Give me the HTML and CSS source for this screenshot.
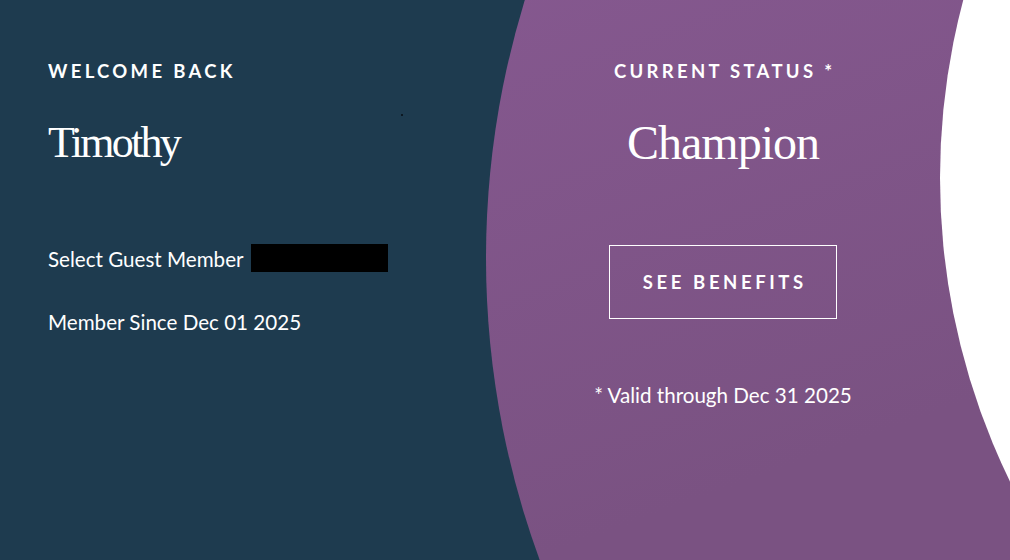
FILE: index.html
```html
<!DOCTYPE html>
<html lang="en">
<head>
<meta charset="utf-8">
<title>Welcome back</title>
<link rel="stylesheet" href="styles.css">
</head>
<body>
<section class="hero">
  <div class="shape shape-purple"></div>
  <div class="shape shape-white"></div>
  <span class="speck"></span>
  <div class="col col-left">
    <h2 class="eyebrow">WELCOME BACK</h2>
    <h1 class="name">Timothy</h1>
    <p class="line line-first">Select Guest Member <span class="redact"></span></p>
    <p class="line">Member Since Dec 01 2025</p>
  </div>
  <div class="col col-right">
    <h2 class="eyebrow">CURRENT STATUS *</h2>
    <h1 class="status">Champion</h1>
    <a class="btn" href="#">SEE BENEFITS</a>
    <p class="valid">* Valid through Dec 31 2025</p>
  </div>
</section>
</body>
</html>
```

FILE: styles.css
```css
* { box-sizing: border-box; }
html, body { margin: 0; padding: 0; }
body { background: #ffffff; }

.hero {
  position: relative;
  width: 1010px;
  height: 560px;
  overflow: hidden;
  background: #1e3b4f;
  display: grid;
  grid-template-columns: 436px 1fr;
  color: #ffffff;
}

.shape {
  position: absolute;
  border-radius: 50%;
}
.shape-purple {
  left: 486px;
  top: -618px;
  width: 1752px;
  height: 1752px;
  background: linear-gradient(160deg, #8f5e99 0%, #85588f 25%, #7a5282 50%);
}
.shape-white {
  left: 940px;
  top: -515px;
  width: 1386px;
  height: 1386px;
  background: #ffffff;
}
.speck {
  position: absolute;
  left: 401px;
  top: 114px;
  width: 2px;
  height: 2px;
  background: #0c1822;
}

.col { position: relative; z-index: 1; }
.col-left { padding: 61px 0 0 48px; }
.col-right {
  padding-top: 61px;
  display: flex;
  flex-direction: column;
  align-items: center;
}

.eyebrow {
  margin: 0;
  font-family: "Lato", sans-serif;
  font-weight: 700;
  font-size: 18.5px;
  line-height: 20px;
  letter-spacing: 3.3px;
}
.col-right .eyebrow { margin-left: 3.3px; }

.name, .status {
  margin: 0;
  font-family: "Liberation Serif", serif;
  font-weight: 400;
}
.name {
  margin-top: 36px;
  font-size: 44px;
  line-height: 52px;
  letter-spacing: -2.7px;
}
.status {
  margin-top: 34px;
  font-size: 48px;
  line-height: 56px;
  letter-spacing: -1px;
}

.line {
  margin: 0;
  font-family: "Lato", sans-serif;
  font-size: 20.6px;
  line-height: 28px;
}
.line-first { margin-top: 75px; margin-bottom: 35px; }
.redact {
  display: inline-block;
  width: 137px;
  height: 28px;
  margin-left: 3px;
  background: #000;
  vertical-align: -5px;
}

.btn {
  margin-top: 74px;
  width: 228px;
  height: 74px;
  border: 1px solid #ffffff;
  display: flex;
  align-items: center;
  justify-content: center;
  padding-left: 3.6px;
  color: #ffffff;
  text-decoration: none;
  font-family: "Lato", sans-serif;
  font-weight: 700;
  font-size: 18.5px;
  letter-spacing: 3.6px;
}

.valid {
  margin: 62px 0 0;
  font-family: "Lato", sans-serif;
  font-size: 20.6px;
  line-height: 28px;
}
```
